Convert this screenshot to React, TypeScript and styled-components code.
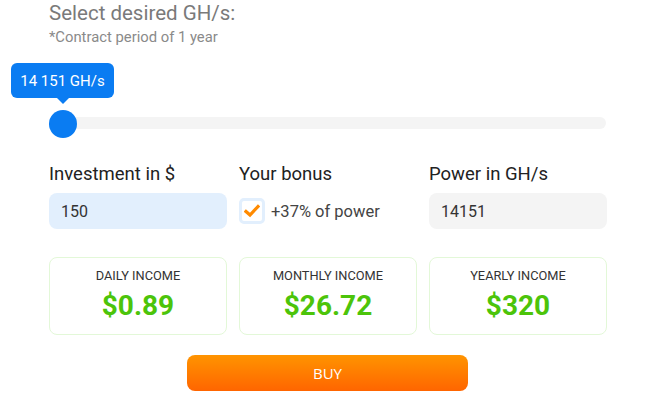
import React from "react";
import styled, { createGlobalStyle } from "styled-components";

const Global = createGlobalStyle`
  html, body { margin: 0; padding: 0; background: #fff; }
  body { font-family: Roboto, "Liberation Sans", sans-serif; }
  * { box-sizing: border-box; }
`;

const Page = styled.div`
  width: 650px;
  height: 405px;
  padding: 0 44px 0 49px;
  display: flex;
  flex-direction: column;
`;

const Title = styled.h2`
  margin: 0;
  font-weight: 400;
  font-size: 20.5px;
  line-height: 26px;
  color: #7a7a7a;
`;

const Sub = styled.div`
  font-size: 14.8px;
  line-height: 18px;
  color: #8a8a8a;
  margin-top: 2px;
`;

const SliderArea = styled.div`
  position: relative;
  height: 80px;
  margin-top: 17px;
`;

const Tooltip = styled.div`
  position: absolute;
  left: -38px;
  top: 0;
  width: 103px;
  height: 35px;
  border-radius: 6px;
  background: #0a7cf2;
  color: #fff;
  font-size: 15px;
  display: flex;
  align-items: center;
  justify-content: center;
  &::after {
    content: "";
    position: absolute;
    left: 46px;
    bottom: -6px;
    border-left: 6px solid transparent;
    border-right: 6px solid transparent;
    border-top: 6px solid #0a7cf2;
  }
`;

const Track = styled.div`
  position: absolute;
  left: 0;
  right: 0;
  top: 54px;
  height: 12px;
  border-radius: 6px;
  background: #f4f4f4;
`;

const Thumb = styled.div`
  position: absolute;
  left: 0;
  top: 47px;
  width: 28px;
  height: 28px;
  border-radius: 50%;
  background: #0a7cf2;
`;

const Grid = styled.div`
  display: grid;
  grid-template-columns: 178px 178px 178px;
  column-gap: 12px;
`;

const Field = styled.div`
  display: flex;
  flex-direction: column;
  margin-top: 19px;
`;

const Label = styled.div`
  font-size: 18.5px;
  line-height: 24px;
  color: #222;
  margin-bottom: 7px;
`;

const InputBox = styled.div<{ $bg: string }>`
  height: 36px;
  border-radius: 8px;
  background: ${(p) => p.$bg};
  padding-left: 12px;
  display: flex;
  align-items: center;
  font-size: 16px;
  color: #333;
`;

const BonusRow = styled.div`
  height: 36px;
  display: flex;
  align-items: center;
  gap: 6px;
  font-size: 16.5px;
  color: #444;
`;

const Check = styled.div`
  width: 26px;
  height: 26px;
  border: 3px solid #e2effd;
  border-radius: 5px;
  background: #fff;
  display: flex;
  align-items: center;
  justify-content: center;
`;

const Cards = styled(Grid)`
  margin-top: 28px;
`;

const Card = styled.div`
  height: 78px;
  border: 1px solid #e3f8d8;
  border-radius: 8px;
  display: flex;
  flex-direction: column;
  align-items: center;
  padding-top: 11px;
`;

const CardLabel = styled.div`
  font-size: 12.8px;
  line-height: 14px;
  color: #333;
  text-transform: uppercase;
`;

const CardValue = styled.div`
  font-size: 28px;
  font-weight: 700;
  line-height: 32px;
  color: #4cc40a;
  margin-top: 7px;
`;

const BuyWrap = styled.div`
  display: flex;
  justify-content: center;
  margin-top: 20px;
  padding-right: 1px;
`;

const Buy = styled.button`
  width: 281px;
  height: 36px;
  border: none;
  border-radius: 8px;
  background: linear-gradient(to bottom, #ff9400, #ff6500);
  color: #fff;
  font-family: "Open Sans", "Liberation Sans", sans-serif;
  font-size: 15px;
  cursor: pointer;
  margin-left: 1px;
`;

const cards = [
  { label: "Daily income", value: "$0.89" },
  { label: "Monthly income", value: "$26.72" },
  { label: "Yearly income", value: "$320" },
];

export default function App() {
  return (
    <>
      <Global />
      <Page>
        <Title>Select desired GH/s:</Title>
        <Sub>*Contract period of 1 year</Sub>
        <SliderArea>
          <Tooltip>14 151 GH/s</Tooltip>
          <Track />
          <Thumb />
        </SliderArea>
        <Grid>
          <Field>
            <Label>Investment in $</Label>
            <InputBox $bg="#e2effd">150</InputBox>
          </Field>
          <Field>
            <Label>Your bonus</Label>
            <BonusRow>
              <Check>
                <svg width="16" height="14" viewBox="0 0 16 14">
                  <path d="M2 7.5 L6 11 L14 2.5" fill="none" stroke="#ff8a00" strokeWidth="3.2" strokeLinecap="square" />
                </svg>
              </Check>
              +37% of power
            </BonusRow>
          </Field>
          <Field>
            <Label>Power in GH/s</Label>
            <InputBox $bg="#f4f4f4">14151</InputBox>
          </Field>
        </Grid>
        <Cards>
          {cards.map((c) => (
            <Card key={c.label}>
              <CardLabel>{c.label}</CardLabel>
              <CardValue>{c.value}</CardValue>
            </Card>
          ))}
        </Cards>
        <BuyWrap>
          <Buy>BUY</Buy>
        </BuyWrap>
      </Page>
    </>
  );
}
